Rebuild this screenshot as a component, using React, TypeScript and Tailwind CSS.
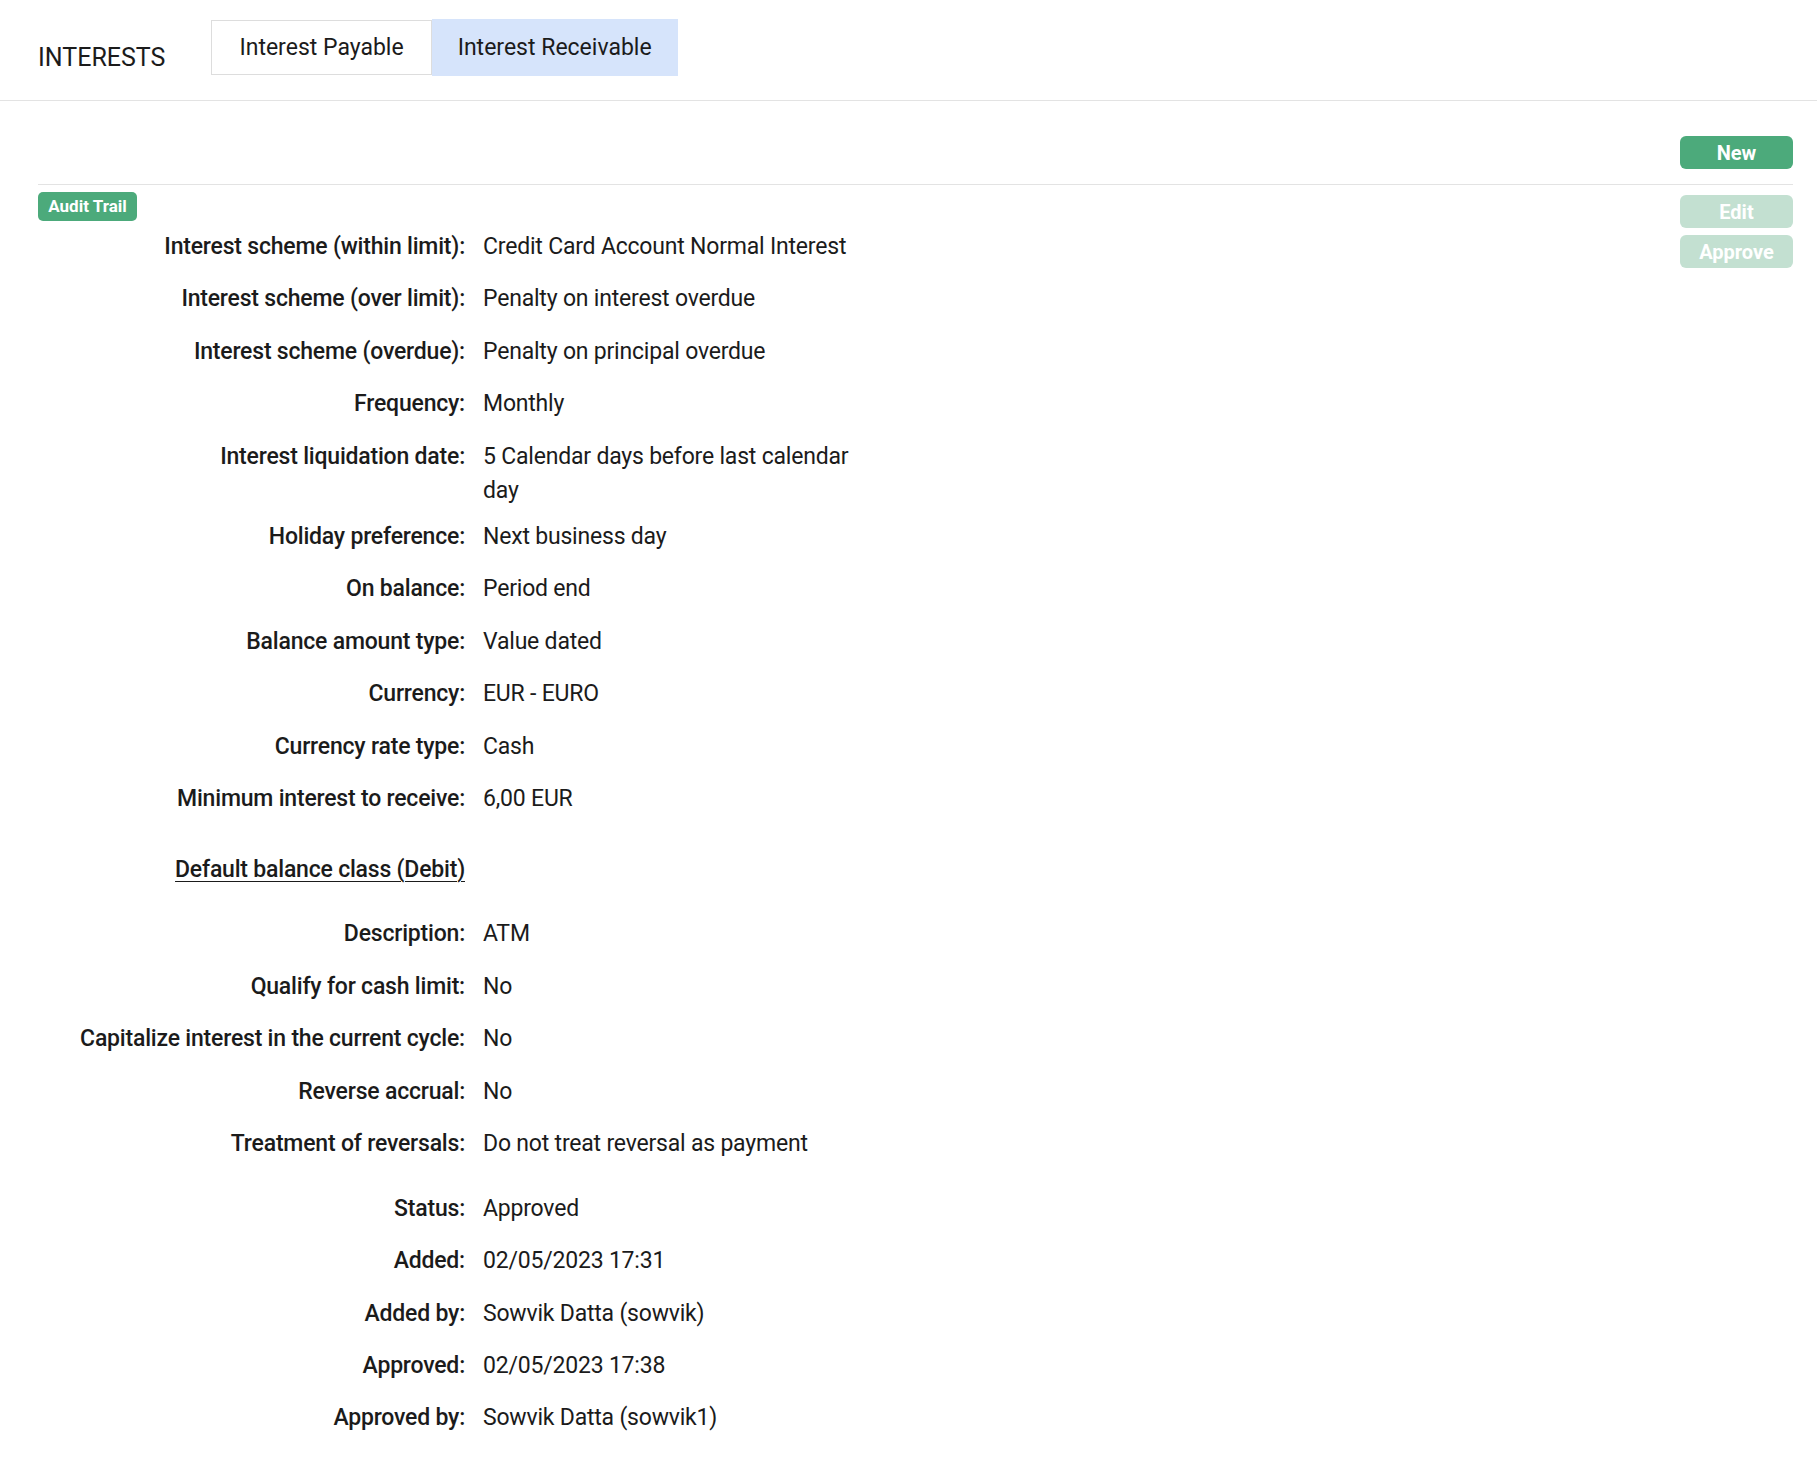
import React from "react";

type Row = {
  label: string;
  value?: string;
  heading?: boolean;
  gap?: string;
};

const rows: Row[] = [
  { label: "Interest scheme (within limit):", value: "Credit Card Account Normal Interest", gap: "mt-0" },
  { label: "Interest scheme (over limit):", value: "Penalty on interest overdue" },
  { label: "Interest scheme (overdue):", value: "Penalty on principal overdue" },
  { label: "Frequency:", value: "Monthly" },
  { label: "Interest liquidation date:", value: "5 Calendar days before last calendar day" },
  { label: "Holiday preference:", value: "Next business day" },
  { label: "On balance:", value: "Period end" },
  { label: "Balance amount type:", value: "Value dated" },
  { label: "Currency:", value: "EUR - EURO" },
  { label: "Currency rate type:", value: "Cash" },
  { label: "Minimum interest to receive:", value: "6,00\u00a0EUR" },
  { label: "Default balance class (Debit)", heading: true, gap: "mt-[30.7px]" },
  { label: "Description:", value: "ATM", gap: "mt-[24.8px]" },
  { label: "Qualify for cash limit:", value: "No" },
  { label: "Capitalize interest in the current cycle:", value: "No" },
  { label: "Reverse accrual:", value: "No" },
  { label: "Treatment of reversals:", value: "Do not treat reversal as payment" },
  { label: "Status:", value: "Approved", gap: "mt-[24.9px]" },
  { label: "Added:", value: "02/05/2023 17:31" },
  { label: "Added by:", value: "Sowvik Datta (sowvik)" },
  { label: "Approved:", value: "02/05/2023 17:38" },
  { label: "Approved by:", value: "Sowvik Datta (sowvik1)" },
];

export default function App() {
  return (
    <div className="min-h-screen bg-white font-['Roboto','Liberation_Sans',sans-serif] text-[#1b1b1b]">
      <header className="flex h-[101px] items-start border-b border-[#e3e3e3] pl-[38px]">
        <h1 className="mt-[40px] text-[25px] font-normal leading-[36px]">INTERESTS</h1>
        <div className="ml-[46px] mt-[20px] flex items-start">
          <button
            type="button"
            className="h-[55px] border border-[#dddddd] bg-white px-[27px] text-[23px] leading-none text-[#1b1b1b]"
          >
            Interest Payable
          </button>
          <button
            type="button"
            className="-mt-px h-[57px] bg-[#d6e4fb] px-[26px] text-[23px] leading-none text-[#1b1b1b]"
          >
            Interest Receivable
          </button>
        </div>
      </header>

      <main className="pl-[38px] pr-[24px] pb-[40px]">
        <div className="flex justify-end pb-[15px] pt-[35px]">
          <button
            type="button"
            className="h-[33px] w-[113px] rounded-[6px] bg-[#4caa7b] text-[20px] font-bold leading-none text-white"
          >
            New
          </button>
        </div>

        <div className="flex items-start justify-between border-t border-[#e3e3e3]">
          <div>
            <button
              type="button"
              className="mt-[7px] flex h-[29px] w-[99px] items-center justify-center rounded-[5px] bg-[#4caa7b] text-[17px] font-bold leading-none text-white"
            >
              Audit Trail
            </button>

            <div className="mt-[9px] flex flex-col tracking-[-0.2px]">
              {rows.map((row) => (
                <div key={row.label} className={`flex items-start ${row.gap ?? "mt-[12.4px]"}`}>
                  <div
                    className={
                      row.heading
                        ? "w-[427px] pb-[6px] text-right text-[23px] font-medium leading-[34px] underline decoration-1 underline-offset-[4px]"
                        : "w-[427px] pb-[6px] text-right text-[23px] font-medium leading-[34px]"
                    }
                  >
                    {row.label}
                  </div>
                  {row.value ? (
                    <div className="ml-[18px] w-[374px] text-[23px] leading-[34px]">{row.value}</div>
                  ) : null}
                </div>
              ))}
            </div>
          </div>

          <div className="mt-[10px] flex w-[113px] flex-col gap-[7px]">
            <button
              type="button"
              disabled
              className="h-[33px] rounded-[6px] bg-[#c3e0d1] text-[20px] font-bold leading-none text-white"
            >
              Edit
            </button>
            <button
              type="button"
              disabled
              className="h-[33px] rounded-[6px] bg-[#c3e0d1] text-[20px] font-bold leading-none text-white"
            >
              Approve
            </button>
          </div>
        </div>
      </main>
    </div>
  );
}
